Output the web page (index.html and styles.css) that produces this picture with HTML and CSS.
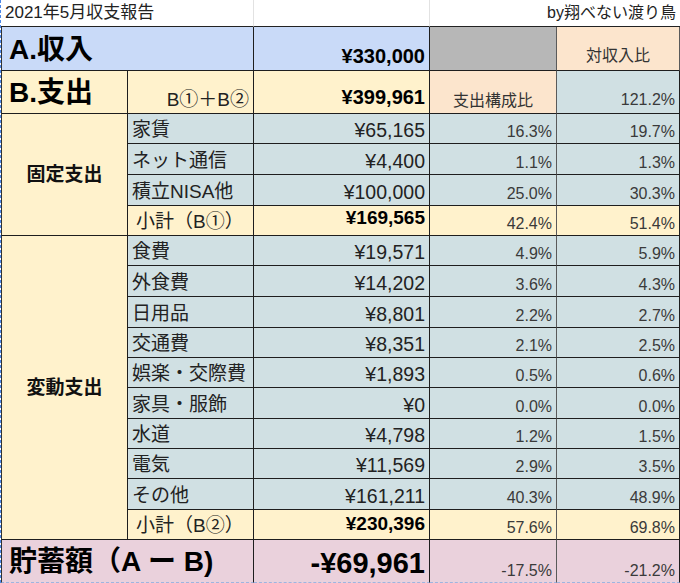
FILE: index.html
```html
<!DOCTYPE html>
<html lang="ja">
<head>
<meta charset="utf-8">
<title>2021年5月収支報告</title>
<link rel="stylesheet" href="styles.css">
</head>
<body>
<div class="sheet">
  <div class="cell title t-left">2021年5月収支報告</div>
  <div class="cell title t-mid"></div>
  <div class="cell title t-right">by翔べない渡り鳥</div>

  <div class="cell blue big span2 first">A.収入</div>
  <div class="cell blue val bold20 padA">¥330,000</div>
  <div class="cell gray soft"></div>
  <div class="cell ora head soft">対収入比</div>

  <div class="cell yel big first">B.支出</div>
  <div class="cell yel val sumlabel">B①＋B②</div>
  <div class="cell yel val bold20 padB">¥399,961</div>
  <div class="cell ora head2 soft">支出構成比</div>
  <div class="cell cyan pct padB2">121.2%</div>

  <div class="cell yel group first g-fixed">固定支出</div>
  <div class="cell cyan lbl">家賃</div>
  <div class="cell cyan val">¥65,165</div>
  <div class="cell cyan pct soft">16.3%</div>
  <div class="cell cyan pct">19.7%</div>

  <div class="cell cyan lbl">ネット通信</div>
  <div class="cell cyan val">¥4,400</div>
  <div class="cell cyan pct soft">1.1%</div>
  <div class="cell cyan pct">1.3%</div>

  <div class="cell cyan lbl">積立NISA他</div>
  <div class="cell cyan val">¥100,000</div>
  <div class="cell cyan pct soft">25.0%</div>
  <div class="cell cyan pct">30.3%</div>

  <div class="cell yel lbl sub">小計（B①）</div>
  <div class="cell yel val bold19 sub1">¥169,565</div>
  <div class="cell yel pct soft">42.4%</div>
  <div class="cell yel pct">51.4%</div>

  <div class="cell yel group first g-var">変動支出</div>
  <div class="cell cyan lbl">食費</div>
  <div class="cell cyan val">¥19,571</div>
  <div class="cell cyan pct soft">4.9%</div>
  <div class="cell cyan pct">5.9%</div>

  <div class="cell cyan lbl">外食費</div>
  <div class="cell cyan val">¥14,202</div>
  <div class="cell cyan pct soft">3.6%</div>
  <div class="cell cyan pct">4.3%</div>

  <div class="cell cyan lbl">日用品</div>
  <div class="cell cyan val">¥8,801</div>
  <div class="cell cyan pct soft">2.2%</div>
  <div class="cell cyan pct">2.7%</div>

  <div class="cell cyan lbl">交通費</div>
  <div class="cell cyan val">¥8,351</div>
  <div class="cell cyan pct soft">2.1%</div>
  <div class="cell cyan pct">2.5%</div>

  <div class="cell cyan lbl">娯楽・交際費</div>
  <div class="cell cyan val">¥1,893</div>
  <div class="cell cyan pct soft">0.5%</div>
  <div class="cell cyan pct">0.6%</div>

  <div class="cell cyan lbl">家具・服飾</div>
  <div class="cell cyan val">¥0</div>
  <div class="cell cyan pct soft">0.0%</div>
  <div class="cell cyan pct">0.0%</div>

  <div class="cell cyan lbl">水道</div>
  <div class="cell cyan val">¥4,798</div>
  <div class="cell cyan pct soft">1.2%</div>
  <div class="cell cyan pct">1.5%</div>

  <div class="cell cyan lbl">電気</div>
  <div class="cell cyan val">¥11,569</div>
  <div class="cell cyan pct soft">2.9%</div>
  <div class="cell cyan pct">3.5%</div>

  <div class="cell cyan lbl">その他</div>
  <div class="cell cyan val">¥161,211</div>
  <div class="cell cyan pct soft">40.3%</div>
  <div class="cell cyan pct">48.9%</div>

  <div class="cell yel lbl sub">小計（B②）</div>
  <div class="cell yel val bold19 sub2">¥230,396</div>
  <div class="cell yel pct soft">57.6%</div>
  <div class="cell yel pct">69.8%</div>

  <div class="cell pink big span2 first last">貯蓄額（A ー B)</div>
  <div class="cell pink val bold29 last">-¥69,961</div>
  <div class="cell pink pct soft last">-17.5%</div>
  <div class="cell pink pct last">-21.2%</div>
</div>
</body>
</html>
```

FILE: styles.css
```css
* { box-sizing: border-box; }
html, body { margin: 0; padding: 0; background: #fff; }
body {
  width: 680px;
  height: 583px;
  overflow: hidden;
  font-family: "Liberation Sans", Arial, "Noto Sans CJK JP", sans-serif;
  color: #222;
}
.sheet {
  display: grid;
  grid-template-columns: 127px 126px 176px 127px 123px;
  grid-template-rows: 27px 44px 43px 30px 31px 31px 30px 30px 31px 31px 30px 30px 31px 30px 30px 31px 30px 43px;
  border-left: 1px dashed #4a86e8;
  width: 680px;
}
.cell {
  display: flex;
  align-items: flex-end;
  border-right: 1px solid #1e1e1e;
  border-bottom: 1px solid #1e1e1e;
  line-height: 1;
  white-space: nowrap;
  overflow: hidden;
  padding: 0 4px 3px 4px;
}
.cell.soft { border-right-color: #5a5a5a; }
.first { border-left: 1px solid #333; }
.span2 { grid-column: span 2; }

.title {
  align-items: center;
  font-size: 16px;
  color: #222;
  border-right-color: #e2e2e2;
  border-bottom-color: #222;
  padding: 0 4px 1px 4px;
}
.t-left { grid-column: span 2; padding-left: 4px; font-size: 17px; }
.t-right { grid-column: span 2; justify-content: flex-end; border-right: none; padding-right: 4px; }

.blue { background: #c9daf8; }
.yel { background: #fff2cc; }
.ora { background: #fce5cd; }
.cyan { background: #d0e0e3; }
.pink { background: #ead1dc; }
.gray { background: #b7b7b7; }

.big {
  font-size: 28px;
  font-weight: bold;
  color: #000;
  padding-left: 7px;
  padding-bottom: 6px;
}
.val {
  justify-content: flex-end;
  font-size: 19.5px;
  padding-bottom: 3px;
}
.pct {
  justify-content: flex-end;
  font-size: 16px;
  color: #3a3a3a;
  padding-bottom: 3px;
}
.lbl {
  font-size: 19px;
  padding-left: 4px;
  padding-bottom: 4px;
  color: #222;
}
.lbl.sub { padding-left: 8px; }
.head { justify-content: center; font-size: 16px; color: #333; padding-bottom: 6px; }
.head2 { justify-content: center; font-size: 16px; color: #333; padding-bottom: 4px; }
.sumlabel { padding-bottom: 4px; color: #222; font-size: 19px; }

.bold20 { font-size: 20px; font-weight: bold; color: #000; }
.bold19 { font-size: 19px; font-weight: bold; color: #000; }
.bold29 { font-size: 29px; font-weight: bold; color: #000; padding-bottom: 4px; }
.padA { padding-bottom: 4px; }
.padB { padding-bottom: 6px; }
.padB2 { padding-bottom: 5px; }
.sub1 { padding-bottom: 8px; }
.sub2 { padding-bottom: 6px; }

.group {
  align-items: center;
  justify-content: center;
  font-size: 19px;
  font-weight: bold;
  color: #111;
  padding: 0;
}
.g-fixed { grid-row: span 4; }
.g-var { grid-row: span 10; }
.last { border-bottom: 1px dashed #9fb4e0; }
```
